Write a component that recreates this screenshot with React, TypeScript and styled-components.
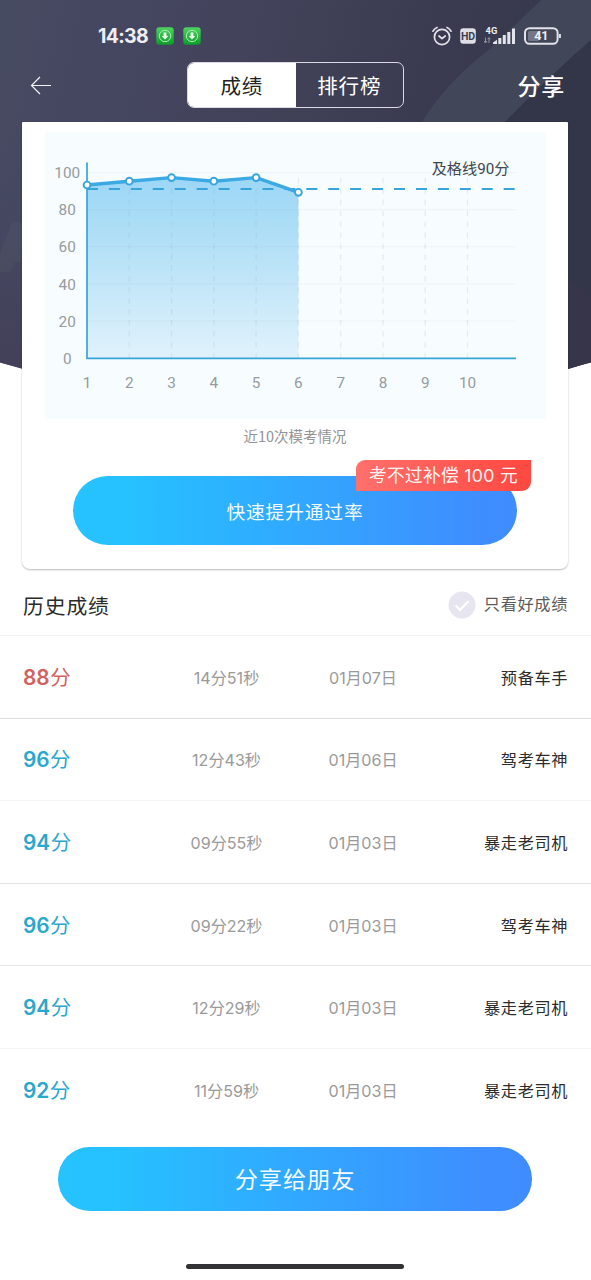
import React from "react";
import styled, { createGlobalStyle } from "styled-components";

const GlobalStyle = createGlobalStyle`
  * { box-sizing: border-box; }
  html, body { margin: 0; padding: 0; background: #fff; }
  body { font-family: "Noto Sans CJK SC", "Noto Sans", sans-serif; color: #2b2b2b; }
  button { font-family: inherit; border: 0; padding: 0; margin: 0; }
`;

const Screen = styled.main`
  position: relative;
  width: 591px;
  height: 1280px;
  overflow: hidden;
  display: flex;
  flex-direction: column;
  background: #fff;
`;

const Backdrop = styled.svg`
  position: absolute;
  left: 0;
  top: 0;
  z-index: 0;
`;

const StatusBar = styled.header`
  position: relative;
  height: 62px;
  padding: 10px 29px 0 98px;
  display: flex;
  align-items: flex-start;
  justify-content: space-between;
  color: #eeeef4;
`;

const StatusGroup = styled.div<{ $gap: number }>`
  display: flex;
  align-items: center;
  gap: ${(p) => p.$gap}px;
  height: 51px;
`;

const Clock = styled.span`
  width: 49px;
  font-family: Inter, "Noto Sans CJK SC", sans-serif;
  font-size: 19.5px;
  font-weight: 700;
  letter-spacing: -0.7px;
  line-height: 24px;
  white-space: nowrap;
`;

const NavBar = styled.nav`
  position: relative;
  height: 59.5px;
  padding: 0 27px 0 30px;
  display: grid;
  grid-template-columns: 157px 217px 1fr;
  align-items: start;
`;

const BackButton = styled.button`
  height: 47px;
  width: 30px;
  display: flex;
  align-items: center;
  background: none;
`;

const Tabs = styled.div`
  height: 46px;
  display: flex;
  border: 1px solid #d9dae2;
  border-radius: 7px;
  overflow: hidden;
`;

const Tab = styled.button<{ $active?: boolean }>`
  flex: 1;
  font-size: 20.5px;
  line-height: 44px;
  letter-spacing: 0.8px;
  color: ${(p) => (p.$active ? "#222" : "#fff")};
  background: ${(p) => (p.$active ? "#fff" : "transparent")};
`;

const ShareLink = styled.button`
  justify-self: end;
  height: 45px;
  background: none;
  color: #fff;
  font-size: 23px;
  font-weight: 500;
  letter-spacing: 0.8px;
  margin-right: -1px;
`;

const Card = styled.section`
  position: relative;
  width: 546px;
  height: 447px;
  margin: 0 auto 0 22px;
  padding-top: 10.5px;
  display: flex;
  flex-direction: column;
  align-items: center;
  background: #fff;
  border-radius: 1px 1px 8px 8px;
  box-shadow: 0 1px 2px rgba(0, 0, 0, 0.28);
`;

const ChartPanel = styled.div`
  width: 501px;
  height: 287px;
  background: #f7fcff;
  svg { display: block; }
`;

const AxisText = styled.text`
  font-family: Roboto, sans-serif;
  font-size: 15.3px;
  fill: #959b9f;
  text-anchor: middle;
`;

const PassText = styled.text`
  font-family: Roboto, "Noto Sans CJK SC", sans-serif;
  font-size: 15.2px;
  fill: #40464a;
  text-anchor: end;
`;

const Caption = styled.p`
  margin: 4px 0 0;
  font-size: 14.5px;
  line-height: 26px;
  color: #949494;
`;

const PillButton = styled.button<{ $w: number; $h: number; $size: number }>`
  flex: none;
  width: ${(p) => p.$w}px;
  height: ${(p) => p.$h}px;
  padding-bottom: 1px;
  border-radius: ${(p) => p.$h / 2}px;
  font-size: ${(p) => p.$size}px;
  letter-spacing: 0.9px;
  color: #f2fbff;
  background: linear-gradient(90deg, #25c3ff 0%, #26c1ff 12%, #31a8ff 50%, #3e8eff 90%, #408cff 100%);
`;

const BoostArea = styled.div`
  position: relative;
  margin-top: 27px;
  height: 69px;
`;

const Ribbon = styled.span`
  position: absolute;
  right: -14px;
  top: -16.5px;
  width: 175px;
  height: 31.5px;
  border-radius: 9px 0 9px 0;
  background: linear-gradient(90deg, #ff706c, #ff4840);
  color: #fff4f2;
  font-family: Inter, "Noto Sans CJK SC", sans-serif;
  font-size: 17.7px;
  line-height: 32px;
  letter-spacing: 0.3px;
  text-align: center;
  white-space: nowrap;
`;

const HistoryHead = styled.div`
  height: 67.5px;
  padding: 6px 23px 0 23px;
  display: flex;
  align-items: center;
  justify-content: space-between;
  border-bottom: 1px solid #f1f4f5;
`;

const HistoryTitle = styled.h2`
  margin: 0;
  font-size: 20.8px;
  font-weight: 400;
  letter-spacing: 0.9px;
`;

const Filter = styled.label`
  display: flex;
  align-items: center;
  gap: 8px;
  font-size: 16.2px;
  letter-spacing: 0.65px;
  color: #5b5b5b;
  span { position: relative; top: -2px; }
`;

const List = styled.ul`
  list-style: none;
  margin: 0;
  padding: 0;
`;

const Row = styled.li<{ $line: string }>`
  height: 82.6px;
  padding: 0 23px;
  display: grid;
  grid-template-columns: 135px 137px 136px 1fr;
  align-items: center;
  border-bottom: 1px solid ${(p) => p.$line};
`;

const Score = styled.span<{ $low?: boolean }>`
  font-size: 20.5px;
  line-height: 30px;
  color: ${(p) => (p.$low ? "#d2625f" : "#2ba7cd")};
  b {
    font-family: Inter, sans-serif;
    font-size: 20.8px;
    font-weight: 600;
    margin-right: 0.5px;
  }
`;

const Meta = styled.span`
  text-align: center;
  font-family: Inter, "Noto Sans CJK SC", sans-serif;
  font-size: 16.1px;
  color: #9a9a9a;
`;

const Rank = styled.span`
  text-align: right;
  font-size: 16.2px;
  letter-spacing: 0.6px;
  color: #2c2c2c;
`;

const Footer = styled.footer`
  flex: 1;
  padding: 15.5px 1px 11px 0;
  display: flex;
  flex-direction: column;
  align-items: center;
  justify-content: space-between;
`;

const HomeIndicator = styled.div`
  width: 218px;
  height: 5.5px;
  border-radius: 3px;
  background: #333234;
`;

const GreenBadge = () => (
  <svg width="18" height="18" viewBox="0 0 18 18">
    <defs>
      <linearGradient id="green" x1="0" y1="0" x2="0" y2="1">
        <stop offset="0" stopColor="#4fd363" />
        <stop offset="1" stopColor="#0d9c2a" />
      </linearGradient>
    </defs>
    <rect x=".3" y=".3" width="17.4" height="17.4" rx="3" fill="url(#green)" />
    <circle cx="9" cy="9" r="5.700" fill="none" stroke="#a5efad" strokeWidth="1" />
    <path d="M7.600 5.500h2.800v3.500h2L9 12.500 5.600 9h2z" fill="#effff0" />
  </svg>
);

const AlarmIcon = () => (
  <svg width="20" height="20" viewBox="0 0 20 20" fill="none" stroke="#e2e2ea" strokeWidth="1.700" strokeLinecap="round" strokeLinejoin="round">
    <circle cx="10" cy="11" r="7.600" />
    <path d="M1 5.200Q2.300 2.600 5 1.500M19 5.200Q17.700 2.600 15 1.500M7 10l3 2.600L13.200 10" />
  </svg>
);

const GlyphText = styled.text`
  font-family: Roboto, sans-serif;
  font-weight: 700;
`;

const HdIcon = () => (
  <svg width="16" height="16" viewBox="0 0 16 16">
    <rect x=".2" y=".2" width="15.600" height="15.600" rx="3" fill="#dedee6" />
    <GlyphText x="8" y="11.700" fontSize="10.500" textAnchor="middle" fill="#3d3e53">HD</GlyphText>
  </svg>
);

const SignalIcon = () => (
  <svg width="32" height="20" viewBox="0 0 32 20">
    <GlyphText x="1.600" y="8" fontSize="9.300" fill="#eeeef4">4G</GlyphText>
    <path d="M1.500 11.500v5M0 15l1.500 2L3 15M5 17v-5M3.700 13.300 5 11.500l1.400 1.800" stroke="#9394a3" fill="none" />
    <path d="M9 18v-1.500l4-2.700V18zM14.300 12h3V18h-3zM18.800 9h3V18h-3zM23.300 6h3V18h-3zM28 2.500h3V18h-3z" fill="#e4e4ec" />
  </svg>
);

const BatteryIcon = () => (
  <svg width="38" height="18" viewBox="0 0 38 18">
    <rect x="4" y="4" width="11" height="10" rx="1.500" fill="#74778a" />
    <rect x="1" y="1.200" width="32.600" height="15.600" rx="4.500" fill="none" stroke="#e2e2ea" strokeWidth="2" />
    <path d="M35.900 7v4" stroke="#e2e2ea" strokeWidth="2" />
    <GlyphText x="17.300" y="13.300" fontSize="12.500" textAnchor="middle" fill="#f0f0f5">41</GlyphText>
  </svg>
);

const X0 = 87;
const STEP = 42.28;
const POINTS = [185, 181.2, 177.6, 181.2, 177.6, 192.3].map((y, i) => [X0 + i * STEP, y]);
const LINE = POINTS.map(([x, y]) => `${x},${y}`).join(" ");
const Y_TICKS = [100, 80, 60, 40, 20, 0];

const ScoreChart = () => (
  <svg width="501" height="287" viewBox="45 132 501 287">
    <defs>
      <linearGradient id="area" x1="0" y1="0" x2="0" y2="1">
        <stop offset="0" stopColor="#9cd7f6" />
        <stop offset="0.3" stopColor="#aedef6" />
        <stop offset="1" stopColor="#e0f2fc" />
      </linearGradient>
    </defs>
    <polygon points={`${LINE} 298.4,358 87,358`} fill="url(#area)" />
    {Y_TICKS.slice(0, 5).map((t, i) => (
      <path key={t} d={`M87 ${172.600 + i * 37.100}H516`} stroke="#8a9ba3" strokeOpacity=".09" />
    ))}
    {Array.from({ length: 9 }, (_, i) => (
      <path key={i} d={`M${X0 + (i + 1) * STEP} 177.700V358`} stroke="#8fa6ae" strokeOpacity=".18" strokeWidth="1.300" strokeDasharray="5.500 5.450" />
    ))}
    <path d="M87 188.900H516" stroke="#36a5dc" strokeWidth="2" strokeDasharray="11 10.930" />
    <path d="M87 162.500V358.300H516" fill="none" stroke="#36a5d8" strokeWidth="1.700" />
    <polyline points={LINE} fill="none" stroke="#3ba9e3" strokeWidth="3.400" strokeLinejoin="round" />
    {POINTS.map(([x, y]) => (
      <circle key={x} cx={x} cy={y} r="3.400" fill="#fff" stroke="#38a5dc" strokeWidth="1.900" />
    ))}
    {Y_TICKS.map((t, i) => (
      <AxisText key={t} x="67.200" y={178 + i * 37.200}>{t}</AxisText>
    ))}
    {Array.from({ length: 10 }, (_, i) => (
      <AxisText key={i} x={X0 + i * STEP} y="388.300">{i + 1}</AxisText>
    ))}
    <PassText x="509.500" y="174">及格线90分</PassText>
  </svg>
);

const RECORDS = [
  { score: 88, time: "14分51秒", date: "01月07日", rank: "预备车手", line: "#dcdfe1" },
  { score: 96, time: "12分43秒", date: "01月06日", rank: "驾考车神", line: "#f3f4f5" },
  { score: 94, time: "09分55秒", date: "01月03日", rank: "暴走老司机", line: "#e3e4e5" },
  { score: 96, time: "09分22秒", date: "01月03日", rank: "驾考车神", line: "#e6e7e8" },
  { score: 94, time: "12分29秒", date: "01月03日", rank: "暴走老司机", line: "#f3f4f5" },
  { score: 92, time: "11分59秒", date: "01月03日", rank: "暴走老司机", line: "transparent" },
];

export default function App() {
  return (
    <Screen>
      <GlobalStyle />
      <Backdrop width="591" height="430" viewBox="0 0 591 430">
        <defs>
          <linearGradient id="sky" x1="0" y1="0" x2="1" y2="0.15">
            <stop offset="0" stopColor="#474b61" />
            <stop offset=".2" stopColor="#454660" />
            <stop offset=".45" stopColor="#42425a" />
            <stop offset=".7" stopColor="#3b3b51" />
            <stop offset="1" stopColor="#35384b" />
          </linearGradient>
          <linearGradient id="side" x1="0" y1="0" x2="0" y2="1">
            <stop offset="0" stopColor="#444963" stopOpacity="0" />
            <stop offset="1" stopColor="#433f58" />
          </linearGradient>
        </defs>
        <path d="M0 0H591V362.500Q295 445 0 362.500z" fill="url(#sky)" />
        <path d="M0 120H23V369L0 362.500z" fill="url(#side)" />
        <path d="M12 222H23V262H15L10 272H0V253z" fill="#4c5064" opacity=".6" />
        <path d="M541 0H591V40Q550 76 505 122H422Q446 82 490 49z" fill="#424659" />
        <path d="M591 40V362L568 369V122H505Q550 76 591 40z" fill="#333648" />
        <path d="M568 278 591 297V362L568 369z" fill="#373549" />
      </Backdrop>

      <StatusBar>
        <StatusGroup $gap={9}>
          <Clock>14:38</Clock>
          <GreenBadge />
          <GreenBadge />
        </StatusGroup>
        <StatusGroup $gap={8}>
          <AlarmIcon />
          <HdIcon />
          <SignalIcon />
          <BatteryIcon />
        </StatusGroup>
      </StatusBar>

      <NavBar>
        <BackButton aria-label="返回">
          <svg width="22" height="19" viewBox="0 0 22 19" fill="none" stroke="#f4f4f8" strokeWidth="1.200">
            <path d="M21 9.500H1.500M10 1 1.500 9.500 10 18" />
          </svg>
        </BackButton>
        <Tabs>
          <Tab $active>成绩</Tab>
          <Tab>排行榜</Tab>
        </Tabs>
        <ShareLink>分享</ShareLink>
      </NavBar>

      <Card>
        <ChartPanel>
          <ScoreChart />
        </ChartPanel>
        <Caption>近10次模考情况</Caption>
        <BoostArea>
          <PillButton $w={444} $h={69} $size={18.7}>快速提升通过率</PillButton>
          <Ribbon>考不过补偿 100 元</Ribbon>
        </BoostArea>
      </Card>

      <HistoryHead>
        <HistoryTitle>历史成绩</HistoryTitle>
        <Filter>
          <svg width="28" height="28" viewBox="0 0 28 28">
            <circle cx="14" cy="14" r="13.500" fill="#e7e6f0" />
            <path d="M7.500 14.500l4.500 4.300 8.500-8.500" fill="none" stroke="#fff" strokeWidth="2.300" />
          </svg>
          <span>只看好成绩</span>
        </Filter>
      </HistoryHead>

      <List>
        {RECORDS.map((r, i) => (
          <Row key={i} $line={r.line}>
            <Score $low={r.score < 90}><b>{r.score}</b>分</Score>
            <Meta>{r.time}</Meta>
            <Meta>{r.date}</Meta>
            <Rank>{r.rank}</Rank>
          </Row>
        ))}
      </List>

      <Footer>
        <PillButton $w={474} $h={63.5} $size={23.2}>分享给朋友</PillButton>
        <HomeIndicator />
      </Footer>
    </Screen>
  );
}
